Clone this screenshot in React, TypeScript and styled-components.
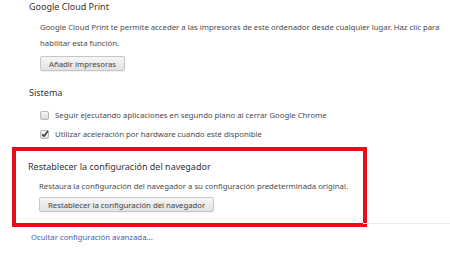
import React from "react";
import styled, { createGlobalStyle } from "styled-components";

const Global = createGlobalStyle`
  html, body { margin: 0; padding: 0; background: #fff; }
  body { font-family: "Noto Sans", "Open Sans", sans-serif; color: #444; }
  * { box-sizing: border-box; }
`;

const Page = styled.div`
  width: 450px;
  height: 253px;
  overflow: hidden;
  padding-left: 12px;
  display: flex;
  flex-direction: column;
`;

const Section = styled.section<{ $top?: number }>`
  display: flex;
  flex-direction: column;
  padding-left: 17px;
  margin-top: ${(p) => p.$top ?? 0}px;
`;

const Heading = styled.h3`
  margin: 0;
  font-size: 9px;
  font-weight: 400;
  line-height: 14px;
  color: #333;
  white-space: nowrap;
`;

const Content = styled.div<{ $top?: number }>`
  display: flex;
  flex-direction: column;
  align-items: flex-start;
  padding-left: 11px;
  margin-top: ${(p) => p.$top ?? 0}px;
`;

const Para = styled.p`
  margin: 0;
  font-size: 7.75px;
  line-height: 16px;
  color: #4a4a4a;
  width: 405px;
`;

const Button = styled.button<{ $top?: number }>`
  margin-top: ${(p) => p.$top ?? 0}px;
  height: 15px;
  padding: 0 8px;
  font-family: inherit;
  font-size: 7.75px;
  color: #444;
  border: 1px solid #c6c6c6;
  border-radius: 2px;
  background: linear-gradient(#f6f6f6, #e2e2e2);
  box-shadow: 0 1px 0 rgba(0, 0, 0, 0.06);
  white-space: nowrap;
`;

const CheckRow = styled.label<{ $top?: number }>`
  display: flex;
  align-items: center;
  gap: 6px;
  height: 14px;
  margin-top: ${(p) => p.$top ?? 0}px;
  font-size: 7.75px;
  color: #4a4a4a;
  white-space: nowrap;
`;

const Box = styled.span`
  width: 9px;
  height: 9px;
  border: 1px solid #b8b8b8;
  border-radius: 2px;
  background: linear-gradient(#f4f4f4, #dcdcdc);
  position: relative;
`;

const ResetBox = styled.div`
  position: relative;
  width: 355px;
  margin-top: 6px;
  border: 4px solid #e3101b;
  padding: 9px 0 11px 12px;
  display: flex;
  flex-direction: column;
  &::after {
    content: "";
    position: absolute;
    left: 100%;
    bottom: -1px;
    width: 90px;
    height: 1px;
    background: #ececec;
  }
`;

const Link = styled.a`
  margin: 3px 0 0 19px;
  font-size: 7.75px;
  line-height: 14px;
  color: #3b63b8;
  text-decoration: none;
  white-space: nowrap;
`;

const Check = () => (
  <svg width="8" height="8" viewBox="0 0 8 8" style={{ position: "absolute", left: 0, top: -1 }}>
    <path d="M1.2 4.2 L3 6.2 L7 1" fill="none" stroke="#333" strokeWidth="1.5" />
  </svg>
);

export default function App() {
  return (
    <Page>
      <Global />
      <Section>
        <Heading>Google Cloud Print</Heading>
        <Content $top={5}>
          <Para>
            Google Cloud Print te permite acceder a las impresoras de este ordenador desde cualquier lugar. Haz clic para
            habilitar esta función.
          </Para>
          <Button $top={5}>Añadir impresoras</Button>
        </Content>
      </Section>
      <Section $top={15}>
        <Heading>Sistema</Heading>
        <Content $top={8}>
          <CheckRow>
            <Box />
            Seguir ejecutando aplicaciones en segundo plano al cerrar Google Chrome
          </CheckRow>
          <CheckRow $top={5}>
            <Box>
              <Check />
            </Box>
            Utilizar aceleración por hardware cuando esté disponible
          </CheckRow>
        </Content>
      </Section>
      <ResetBox>
        <Heading>Restablecer la configuración del navegador</Heading>
        <Content $top={4}>
          <Para>Restaura la configuración del navegador a su configuración predeterminada original.</Para>
          <Button $top={3}>Restablecer la configuración del navegador</Button>
        </Content>
      </ResetBox>
      <Link href="#">Ocultar configuración avanzada...</Link>
    </Page>
  );
}
